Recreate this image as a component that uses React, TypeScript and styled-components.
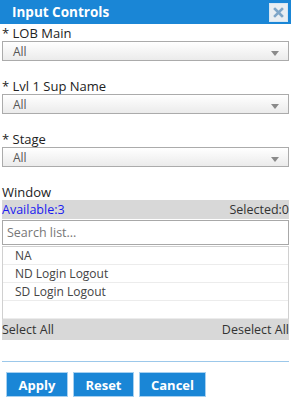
import React from "react";
import styled, { createGlobalStyle } from "styled-components";

const GlobalStyle = createGlobalStyle`
  html, body {
    margin: 0;
    padding: 0;
    background: #ffffff;
  }
  body {
    font-family: "Open Sans", "DejaVu Sans", sans-serif;
    color: #222;
  }
`;

const Panel = styled.div`
  width: 291px;
  height: 409px;
  background: #fff;
  overflow: hidden;
`;

const Header = styled.div`
  height: 24px;
  background: #1a86d6;
  display: flex;
  align-items: center;
  justify-content: space-between;
  padding: 0 3px 0 12px;
`;

const Title = styled.span`
  color: #fff;
  font-weight: bold;
  font-size: 13.5px;
`;

const CloseButton = styled.button`
  width: 19px;
  height: 19px;
  margin-top: 1px;
  padding: 0;
  border: 1px solid #d6e6f3;
  background: #e9eef2;
  display: flex;
  align-items: center;
  justify-content: center;
  cursor: pointer;
`;

const Body = styled.div`
  padding: 1px 2px 0;
`;

const Field = styled.div`
  margin-bottom: 17px;
`;

const Label = styled.div`
  font-size: 13px;
  line-height: 16px;
  color: #222;
`;

const SelectBox = styled.div`
  height: 18px;
  border: 1px solid #ababab;
  background: linear-gradient(#ffffff, #ebebeb);
  display: flex;
  align-items: center;
  justify-content: space-between;
  padding: 0 9px 0 10px;
  font-size: 12px;
  color: #555;
`;

const Arrow = styled.span`
  width: 0;
  height: 0;
  margin-top: 4px;
  border-left: 4px solid transparent;
  border-right: 4px solid transparent;
  border-top: 5px solid #8a8a8a;
`;

const SectionLabel = styled(Label)`
  margin-top: 1px;
`;

const InfoBar = styled.div<{ $tall?: boolean }>`
  height: ${(p) => (p.$tall ? "21px" : "19px")};
  background: #d8d8d8;
  display: flex;
  align-items: center;
  justify-content: space-between;
  font-size: 12.5px;
  color: #333;
`;

const Available = styled.span`
  color: #1a1af0;
`;

const SearchInput = styled.input`
  display: block;
  box-sizing: border-box;
  width: 100%;
  height: 25px;
  margin-top: 1px;
  border: 1px solid #a8a8a8;
  padding: 0 4px;
  font-family: "Open Sans", "DejaVu Sans", sans-serif;
  font-size: 12.5px;
  color: #333;
  outline: none;
  &::placeholder {
    color: #777;
  }
`;

const List = styled.ul`
  list-style: none;
  margin: 1px 0 0;
  padding: 0;
  height: 72px;
  border: 1px solid #d0d0d0;
  border-bottom: none;
`;

const Item = styled.li`
  height: 17px;
  line-height: 17px;
  border-bottom: 1px solid #ececec;
  padding-left: 12px;
  font-size: 12px;
  color: #444;
`;

const Divider = styled.hr`
  margin: 21px 0 0;
  border: none;
  border-top: 1px solid #9cc8ea;
`;

const Actions = styled.div`
  display: flex;
  gap: 5px;
  padding: 10px 4px 0;
`;

const ActionButton = styled.button<{ $w: number }>`
  width: ${(p) => p.$w}px;
  height: 25px;
  border: 1px solid #a6d0f0;
  background: #1a86d6;
  color: #fff;
  font-family: "Open Sans", "DejaVu Sans", sans-serif;
  font-weight: bold;
  font-size: 13px;
  padding: 0;
  cursor: pointer;
`;

const fields = ["LOB Main", "Lvl 1 Sup Name", "Stage"];
const items = ["NA", "ND Login Logout", "SD Login Logout", ""];

export default function App() {
  return (
    <Panel>
      <GlobalStyle />
      <Header>
        <Title>Input Controls</Title>
        <CloseButton aria-label="Close">
          <svg width="11" height="11" viewBox="0 0 11 11">
            <path
              d="M2 2 L9 9 M9 2 L2 9"
              stroke="#7ea6c8"
              strokeWidth="2.6"
              strokeLinecap="square"
            />
          </svg>
        </CloseButton>
      </Header>
      <Body>
        {fields.map((f) => (
          <Field key={f}>
            <Label>* {f}</Label>
            <SelectBox>
              <span>All</span>
              <Arrow />
            </SelectBox>
          </Field>
        ))}
        <SectionLabel>Window</SectionLabel>
        <InfoBar>
          <Available>Available:3</Available>
          <span>Selected:0</span>
        </InfoBar>
        <SearchInput placeholder="Search list..." />
        <List>
          {items.map((it, i) => (
            <Item key={i}>{it}</Item>
          ))}
        </List>
        <InfoBar $tall>
          <span>Select All</span>
          <span>Deselect All</span>
        </InfoBar>
        <Divider />
        <Actions>
          <ActionButton $w={62}>Apply</ActionButton>
          <ActionButton $w={61}>Reset</ActionButton>
          <ActionButton $w={67}>Cancel</ActionButton>
        </Actions>
      </Body>
    </Panel>
  );
}
